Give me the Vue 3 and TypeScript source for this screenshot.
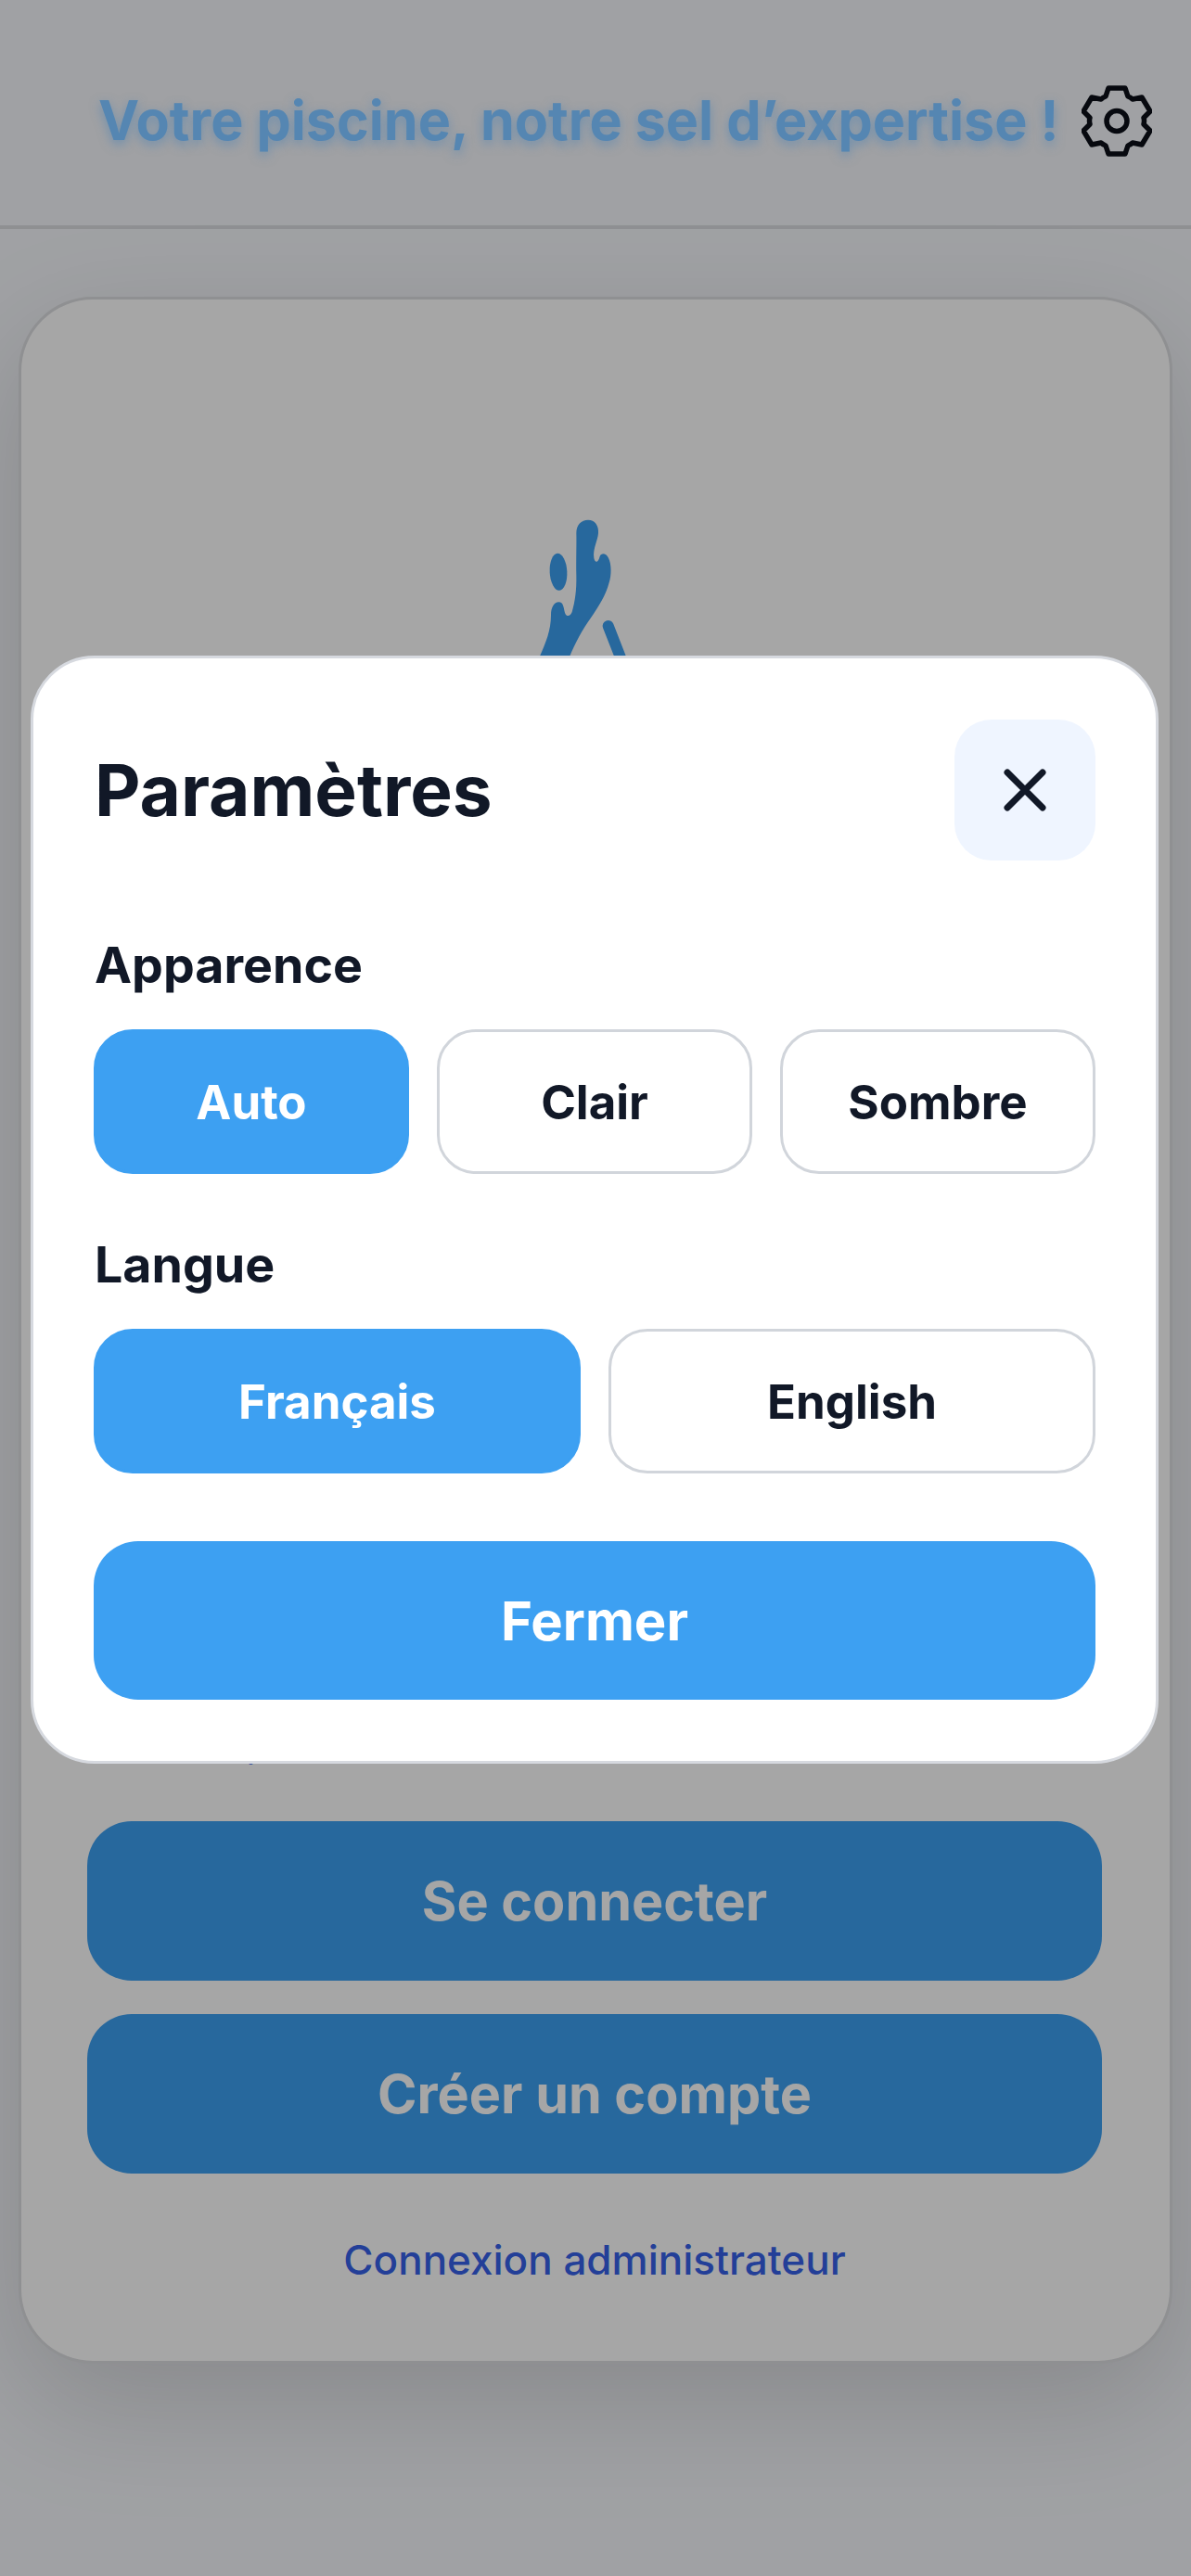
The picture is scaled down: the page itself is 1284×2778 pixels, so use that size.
<script setup lang="ts">
import { ref } from 'vue';

const theme = ref('auto');
const lang = ref('fr');

const themes = [
  { id: 'auto', label: 'Auto' },
  { id: 'light', label: 'Clair' },
  { id: 'dark', label: 'Sombre' },
];
const langs = [
  { id: 'fr', label: 'Français' },
  { id: 'en', label: 'English' },
];
</script>

<template>
  <div class="page">
    <header class="topbar">
      <h1 class="slogan">Votre piscine, notre sel d’expertise !</h1>
      <button class="gear" type="button" aria-label="Paramètres">
        <svg viewBox="0 0 76 77" width="76" height="77" fill="none" stroke="#0b0f18" stroke-width="5.5" stroke-linejoin="round">
          <path d="M29 3 H47 L50 12 Q53 13 55 15 L65 13 L74 28 L67 35 Q68 38 67 42 L74 49 L65 64 L55 62 Q53 64 50 65 L47 74 H29 L26 65 Q23 64 21 62 L11 64 L2 49 L9 42 Q8 38 9 35 L2 28 L11 13 L21 15 Q23 13 26 12 Z" />
          <circle cx="38" cy="38.5" r="11" />
        </svg>
      </button>
    </header>

    <main class="card">
      <svg class="logo" viewBox="3 0 1200 660" width="400" height="220">
        <path fill="#3da0f2" d="M425 565 C445 520 462 480 462 430 C462 405 472 388 487 388 C503 388 503 408 507 422 C511 436 524 436 530 420 C540 385 545 350 544 300 C543 250 545 200 544 165 C544 138 560 122 582 122 C604 122 617 140 615 165 C613 190 597 215 601 245 C604 262 615 262 620 240 C624 228 640 228 648 245 C658 265 658 300 650 325 C640 365 615 405 590 440 C565 475 540 520 522 565 Z" />
        <ellipse fill="#3da0f2" cx="486" cy="290" rx="28" ry="60" transform="rotate(-3 486 290)" />
        <path stroke="#3da0f2" stroke-width="36" stroke-linecap="round" fill="none" d="M647 465 L690 575" />
      </svg>
      <a class="forgot">Mot de passe oublié ?</a>
      <div class="actions">
        <button class="primary" type="button">Se connecter</button>
        <button class="primary" type="button">Créer un compte</button>
      </div>
      <a class="admin">Connexion administrateur</a>
    </main>

    <div class="overlay">
      <section class="modal">
        <div class="modal-head">
          <h2>Paramètres</h2>
          <button class="close" type="button" aria-label="Fermer">
            <svg viewBox="0 0 48 48" width="48" height="48" fill="none" stroke="#111827" stroke-width="7" stroke-linecap="round">
              <path d="M5 5 L43 43 M43 5 L5 43" />
            </svg>
          </button>
        </div>

        <h3 class="label first">Apparence</h3>
        <div class="choices">
          <button
            v-for="t in themes"
            :key="t.id"
            type="button"
            :class="['choice', { active: theme === t.id }]"
            @click="theme = t.id"
          >{{ t.label }}</button>
        </div>

        <h3 class="label">Langue</h3>
        <div class="choices">
          <button
            v-for="l in langs"
            :key="l.id"
            type="button"
            :class="['choice', { active: lang === l.id }]"
            @click="lang = l.id"
          >{{ l.label }}</button>
        </div>

        <button class="close-wide" type="button">Fermer</button>
      </section>
    </div>
  </div>
</template>

<style>
body {
  background: #f6f8fc;
}
</style>

<style scoped>
.page {
  position: relative;
  height: 2778px;
  overflow: hidden;
  background: #f6f8fc;
  font-family: Inter, "Liberation Sans", sans-serif;
  color: #111827;
}

button {
  font-family: inherit;
  border: none;
  cursor: pointer;
}

.topbar {
  height: 247px;
  box-sizing: border-box;
  border-bottom: 4px solid #dcdde1;
  display: flex;
  align-items: flex-start;
  padding: 92px 43px 0 106px;
  gap: 24px;
}

.slogan {
  position: relative;
  z-index: 2;
  margin: 0;
  flex: 1;
  font-size: 59.2px;
  line-height: 76px;
  font-weight: 700;
  color: #5586b2;
  white-space: nowrap;
  text-shadow: 0 4px 12px rgba(85, 134, 178, 0.7);
}

.gear {
  background: none;
  padding: 0;
  width: 76px;
  height: 77px;
}

.card {
  margin: 73px 20px 0;
  height: 2229px;
  box-sizing: border-box;
  background: #fff;
  border: 3px solid #dcdde0;
  border-radius: 80px;
  padding: 0 73px 0 71px;
  display: flex;
  flex-direction: column;
  box-shadow: 0 44px 130px rgba(0, 0, 0, 0.15);
}

.logo {
  align-self: center;
  margin-top: 197px;
  flex: none;
}

.forgot {
  margin-top: auto;
  margin-bottom: 59px;
  margin-left: 28px;
  font-size: 40px;
  line-height: 48px;
  color: #3762ea;
}

.actions {
  display: flex;
  flex-direction: column;
  gap: 36px;
}

.primary {
  height: 172px;
  border-radius: 48px;
  background: #3da0f2;
  color: #fff;
  font-size: 57.5px;
  font-weight: 700;
}

.admin {
  margin: 65px 0 81px;
  text-align: center;
  font-size: 44px;
  line-height: 56px;
  font-weight: 500;
  color: #3762ea;
}

.overlay {
  position: fixed;
  inset: 0;
  background: rgba(0, 0, 0, 0.35);
  padding: 707px 35px 0 33px;
}

.modal {
  box-sizing: border-box;
  width: 1216px;
  height: 1195px;
  background: #fff;
  border: 3px solid #d6d9df;
  border-radius: 69px;
  padding: 66px 65px;
}

.modal-head {
  display: flex;
  justify-content: space-between;
  align-items: center;
}

.modal-head h2 {
  margin: 0 0 0 1px;
  font-size: 76.5px;
  font-weight: 700;
  line-height: 92px;
}

.close {
  width: 152px;
  height: 152px;
  border-radius: 40px;
  background: #eff5ff;
  display: flex;
  align-items: center;
  justify-content: center;
  padding: 0;
}

.label {
  margin: 65px 0 0 1px;
  font-size: 53.7px;
  line-height: 66px;
  font-weight: 700;
}

.label.first {
  margin-top: 80px;
}

.choices {
  display: flex;
  gap: 30px;
  margin-top: 36px;
}

.choice {
  flex: 1;
  height: 156px;
  box-sizing: border-box;
  border-radius: 42px;
  border: 3px solid #d1d5db;
  background: #fff;
  color: #111827;
  font-size: 51px;
  font-weight: 700;
}

.choice.active {
  background: #3da0f2;
  border-color: #3da0f2;
  color: #fff;
}

.close-wide {
  display: block;
  width: 100%;
  height: 171px;
  margin-top: 73px;
  border-radius: 48px;
  background: #3da0f2;
  color: #fff;
  font-size: 58px;
  font-weight: 700;
}
</style>
